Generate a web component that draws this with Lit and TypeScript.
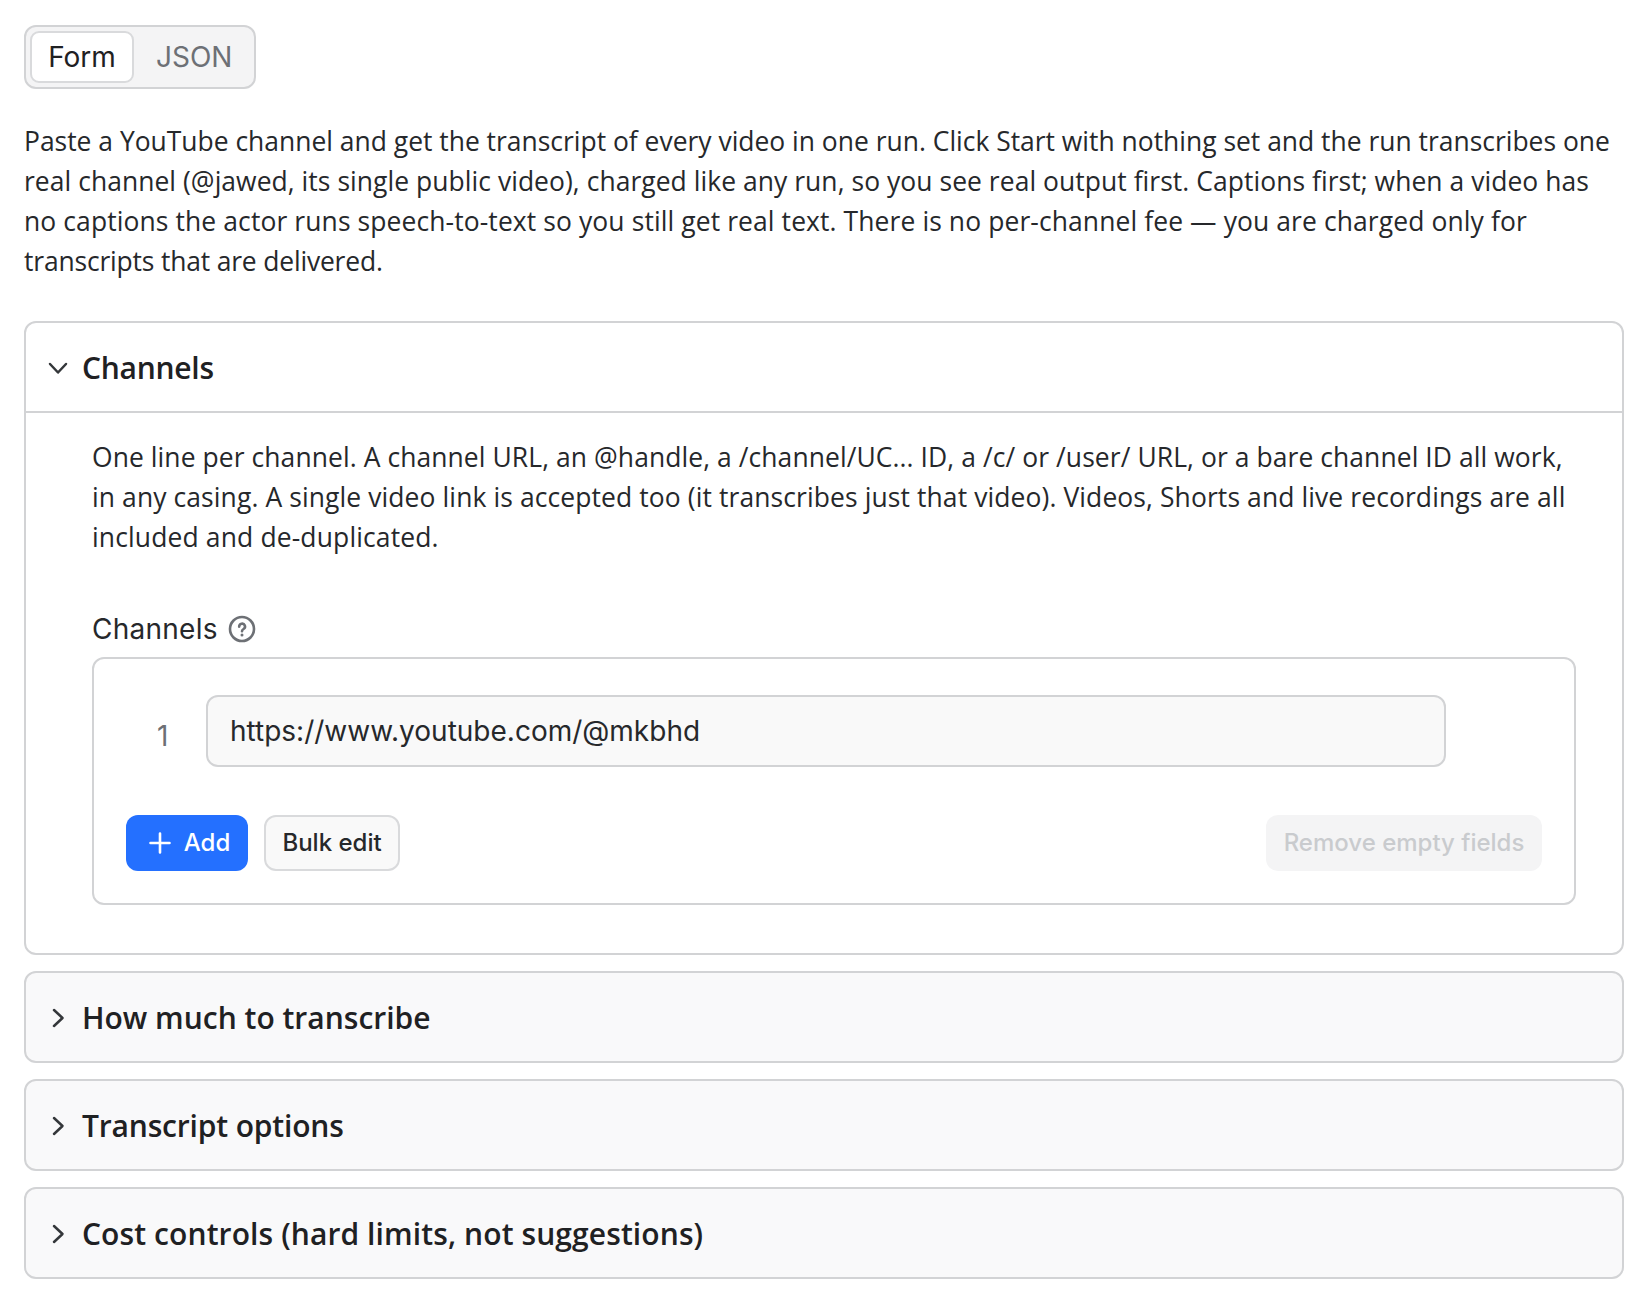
import { LitElement, html, css, svg } from "lit";
import { customElement } from "lit/decorators.js";

const chevron = (open: boolean) => html`<svg class="chev" viewBox="0 0 24 24" fill="none" stroke="#34373a" stroke-width="2.5" stroke-linecap="round" stroke-linejoin="round">${open ? svg`<path d="M4 8l8 8.5 8-8.5"/>` : svg`<path d="M8 4l8.5 8L8 20"/>`}</svg>`;

const introLines: [string, number][] = [
  ["Paste a YouTube channel and get the transcript of every video in one run. Click Start with nothing set and the run transcribes one", 0],
  ["real channel (@jawed, its single public video), charged like any run, so you see real output first. Captions first; when a video has", 0.058],
  ["no captions the actor runs speech-to-text so you still get real text. There is no per-channel fee — you are charged only for", 0.11],
  ["transcripts that are delivered.", -0.17],
];
const descLines: [string, number][] = [
  ["One line per channel. A channel URL, an @handle, a /channel/UC... ID, a /c/ or /user/ URL, or a bare channel ID all work,", 0.086],
  ["in any casing. A single video link is accepted too (it transcribes just that video). Videos, Shorts and live recordings are all", 0.11],
  ["included and de-duplicated.", 0.15],
];
const lines = (rows: [string, number][]) => rows.map(([t, s]) => html`<span class="line" style="letter-spacing:${s}px">${t}</span>`);
const head = (open: boolean, t: string, s: number) => html`<div class="head">${chevron(open)}<span style="letter-spacing:${s}px">${t}</span></div>`;

@customElement("app-root")
export class AppRoot extends LitElement {
  static styles = css`
    :host { display: block; box-sizing: border-box; height: 1290px; padding: 25px 24px 0; background: #fff; color: #1f2123; font-family: "Open Sans", sans-serif; }
    * { box-sizing: border-box; }
    .tabs { display: inline-flex; align-items: center; width: 232px; height: 64px; padding: 4px; border: 2px solid #d2d3d5; border-radius: 12px; background: #f4f4f5; font: 400 28px/40px Inter, sans-serif; }
    .tab { display: flex; align-items: center; justify-content: center; height: 52px; }
    .tab.on { width: 104px; background: #fff; border: 2px solid #d9dadc; border-radius: 9px; color: #1f2123; }
    .tab.off { margin-left: 22px; color: #6d7075; }
    .intro { margin: 32px 0 0; font-size: 26.44px; line-height: 40px; white-space: nowrap; color: #26282b; }
    .line { display: block; }
    .panels { display: flex; flex-direction: column; gap: 16px; margin-top: 40px; }
    .panel { border: 2px solid #d2d3d5; border-radius: 12px; background: #f9f9fa; }
    .panel.open { background: #fff; }
    .head { display: flex; align-items: center; height: 88px; padding: 2px 0 0 20px; font-size: 30px; font-weight: 600; line-height: 40px; color: #1f2123; }
    .open .head { height: 90px; border-bottom: 2px solid #d2d3d5; }
    .chev { width: 24px; height: 24px; margin-right: 12px; flex: none; }
    .body { padding: 24px 46px 48px 66px; }
    .desc { margin: 0; font-size: 26.44px; line-height: 40px; white-space: nowrap; color: #26282b; }
    .label { display: flex; align-items: center; gap: 10px; margin-top: 52px; font: 400 28px/40px Inter, sans-serif; letter-spacing: 0.25px; color: #26282b; }
    .help { width: 28px; height: 28px; flex: none; }
    .box { margin-top: 8px; height: 248px; padding: 36px 32px 31px; border: 2px solid #d2d3d5; border-radius: 12px; }
    .row { display: flex; align-items: center; padding-right: 96px; }
    .num { width: 80px; padding: 10px 0 0 31px; font: 400 28px/40px Inter, sans-serif; color: #6d7075; }
    .input { flex: 1; height: 72px; padding: 0 22px; display: flex; align-items: center; border: 2px solid #d2d3d5; border-radius: 12px; background: #f9f9f9; font: 400 28px/40px Inter, sans-serif; color: #26282b; }
    .actions { display: flex; align-items: center; gap: 16px; margin-top: 48px; }
    .btn { display: flex; align-items: center; justify-content: center; height: 56px; border-radius: 12px; font: 500 24px/32px Inter, sans-serif; }
    .add { width: 122px; gap: 12px; padding-left: 4px; background: #2470ff; color: #fff; }
    .add svg { width: 24px; height: 24px; }
    .bulk { width: 136px; border: 2px solid #d9dadc; background: #f9f9f9; color: #26282b; }
    .remove { width: 276px; margin-left: auto; background: #f4f4f5; color: #c9cbce; }
  `;

  render() {
    return html`
      <div class="tabs"><div class="tab on">Form</div><div class="tab off">JSON</div></div>
      <div class="intro">${lines(introLines)}</div>
      <div class="panels">
        <section class="panel open">
          ${head(true, "Channels", -0.25)}
          <div class="body">
            <div class="desc">${lines(descLines)}</div>
            <div class="label">Channels
              <svg class="help" viewBox="0 0 28 28" fill="none" stroke="#6d7075"><circle cx="14" cy="14" r="12" stroke-width="2.6"/><path d="M11.2 11.6a2.9 2.9 0 1 1 4.4 2.4c-1 .6-1.6 1-1.6 2.2" stroke-width="2.6" stroke-linecap="round"/><circle cx="14" cy="20" r="1.5" fill="#6d7075" stroke="none"/></svg>
            </div>
            <div class="box">
              <div class="row"><div class="num">1</div><div class="input">https://www.youtube.com/@mkbhd</div></div>
              <div class="actions">
                <div class="btn add"><svg viewBox="0 0 24 24" fill="none" stroke="#fff" stroke-width="2.6" stroke-linecap="round"><path d="M12 2.5v19M2.5 12h19"/></svg>Add</div>
                <div class="btn bulk">Bulk edit</div>
                <div class="btn remove">Remove empty fields</div>
              </div>
            </div>
          </div>
        </section>
        <section class="panel">${head(false, "How much to transcribe", 0)}</section>
        <section class="panel">${head(false, "Transcript options", -0.17)}</section>
        <section class="panel">${head(false, "Cost controls (hard limits, not suggestions)", 0.1)}</section>
      </div>
    `;
  }
}
